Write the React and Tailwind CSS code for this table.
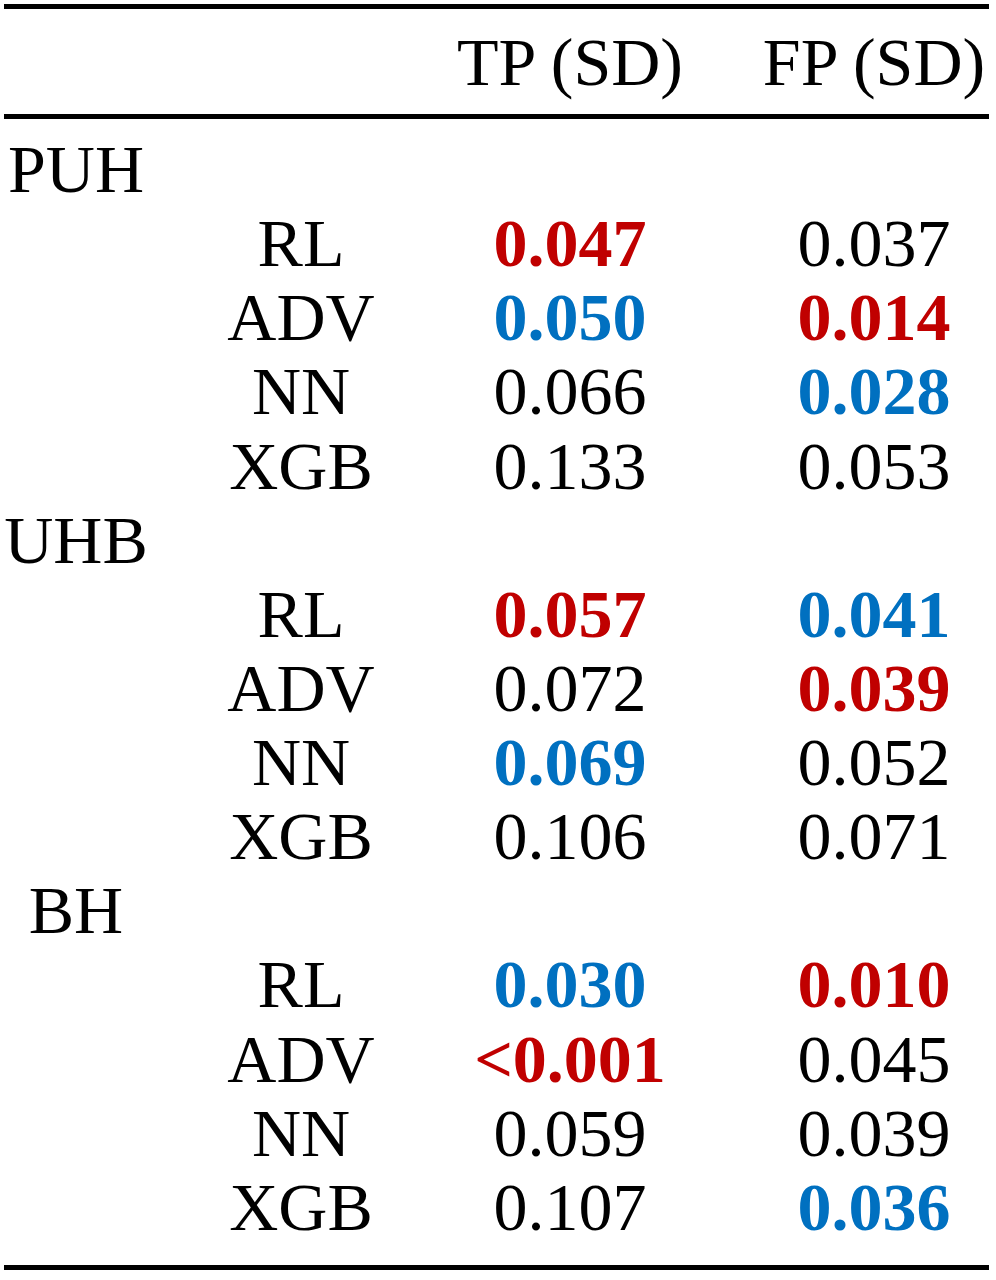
const R = "text-[#c00000] font-bold";
const B = "text-[#0070c0] font-bold";

const groups = [
  {
    name: "PUH",
    rows: [
      ["RL", ["0.047", R], ["0.037", ""]],
      ["ADV", ["0.050", B], ["0.014", R]],
      ["NN", ["0.066", ""], ["0.028", B]],
      ["XGB", ["0.133", ""], ["0.053", ""]],
    ],
  },
  {
    name: "UHB",
    rows: [
      ["RL", ["0.057", R], ["0.041", B]],
      ["ADV", ["0.072", ""], ["0.039", R]],
      ["NN", ["0.069", B], ["0.052", ""]],
      ["XGB", ["0.106", ""], ["0.071", ""]],
    ],
  },
  {
    name: "BH",
    rows: [
      ["RL", ["0.030", B], ["0.010", R]],
      ["ADV", ["<0.001", R], ["0.045", ""]],
      ["NN", ["0.059", ""], ["0.039", ""]],
      ["XGB", ["0.107", ""], ["0.036", B]],
    ],
  },
];

function Row({ a, b, c, d }) {
  return (
    <div className="flex h-[74.14px] items-center">
      <div className="w-[152px] text-center">{a}</div>
      <div className="w-[298px] text-center">{b}</div>
      <div className={"w-[240px] text-center " + (c ? c[1] : "")}>{c ? c[0] : ""}</div>
      <div className={"ml-[66px] w-[236px] text-center " + (d ? d[1] : "")}>{d ? d[0] : ""}</div>
    </div>
  );
}

export default function App() {
  return (
    <div className="w-[996px] h-[1280px] bg-white text-black text-[68px] leading-[74px] font-['Liberation_Serif','Times_New_Roman',serif] pt-[4px]">
      <div className="mx-[4px] w-[985px] h-[5px] bg-black"></div>
      <div className="flex h-[105px] items-center">
        <div className="w-[152px]"></div>
        <div className="w-[298px]"></div>
        <div className="w-[240px] text-center">TP (SD)</div>
        <div className="ml-[66px] w-[236px] text-center">FP (SD)</div>
      </div>
      <div className="mx-[4px] w-[985px] h-[5px] bg-black"></div>
      <div className="pt-[13px] pb-[21px]">
        {groups.map((g) => (
          <div key={g.name}>
            <Row a={g.name} />
            {g.rows.map((r, i) => (
              <Row key={i} b={r[0]} c={r[1]} d={r[2]} />
            ))}
          </div>
        ))}
      </div>
      <div className="mx-[4px] w-[985px] h-[5px] bg-black"></div>
    </div>
  );
}
